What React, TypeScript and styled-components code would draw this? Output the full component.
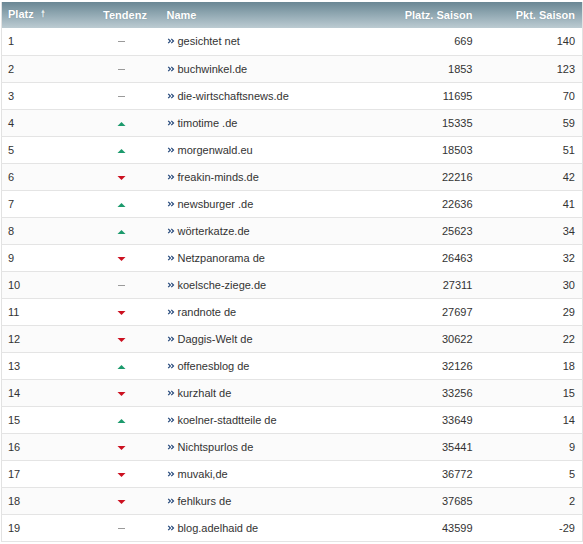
import React from "react";
import styled, { createGlobalStyle } from "styled-components";

const Global = createGlobalStyle`
  html, body { margin: 0; padding: 0; background: #fff; }
  body { font-family: "Liberation Sans", Arial, sans-serif; }
`;

type Trend = "up" | "down" | "same";
interface Row { place: number; trend: Trend; name: string; seasonPlace: number; points: number; }

const rows: Row[] = [
  { place: 1, trend: "same", name: "gesichtet net", seasonPlace: 669, points: 140 },
  { place: 2, trend: "same", name: "buchwinkel.de", seasonPlace: 1853, points: 123 },
  { place: 3, trend: "same", name: "die-wirtschaftsnews.de", seasonPlace: 11695, points: 70 },
  { place: 4, trend: "up", name: "timotime .de", seasonPlace: 15335, points: 59 },
  { place: 5, trend: "up", name: "morgenwald.eu", seasonPlace: 18503, points: 51 },
  { place: 6, trend: "down", name: "freakin-minds.de", seasonPlace: 22216, points: 42 },
  { place: 7, trend: "up", name: "newsburger .de", seasonPlace: 22636, points: 41 },
  { place: 8, trend: "up", name: "wörterkatze.de", seasonPlace: 25623, points: 34 },
  { place: 9, trend: "down", name: "Netzpanorama de", seasonPlace: 26463, points: 32 },
  { place: 10, trend: "same", name: "koelsche-ziege.de", seasonPlace: 27311, points: 30 },
  { place: 11, trend: "down", name: "randnote de", seasonPlace: 27697, points: 29 },
  { place: 12, trend: "down", name: "Daggis-Welt de", seasonPlace: 30622, points: 22 },
  { place: 13, trend: "up", name: "offenesblog de", seasonPlace: 32126, points: 18 },
  { place: 14, trend: "down", name: "kurzhalt de", seasonPlace: 33256, points: 15 },
  { place: 15, trend: "up", name: "koelner-stadtteile de", seasonPlace: 33649, points: 14 },
  { place: 16, trend: "down", name: "Nichtspurlos de", seasonPlace: 35441, points: 9 },
  { place: 17, trend: "down", name: "muvaki,de", seasonPlace: 36772, points: 5 },
  { place: 18, trend: "down", name: "fehlkurs de", seasonPlace: 37685, points: 2 },
  { place: 19, trend: "same", name: "blog.adelhaid de", seasonPlace: 43599, points: -29 },
];

const Wrap = styled.div`
  padding-top: 2px;
  padding-left: 1px;
  width: 581px;
`;

const Table = styled.table`
  width: 581px;
  border-collapse: collapse;
  table-layout: fixed;
  font-size: 11px;
  color: #333;
  border-left: 1px solid #e2e2e2;
  border-right: 1px solid #e2e2e2;
`;

const HeadRow = styled.tr`
  height: 26px;
  background: linear-gradient(to bottom, #6a8794 0%, #93aab4 50%, #bccbd2 100%);
`;

const Th = styled.th<{ $align?: "left" | "center" | "right" }>`
  color: #fff;
  font-weight: bold;
  font-size: 11px;
  text-align: ${(p) => p.$align ?? "left"};
  padding: 0 7px 0 6px;
  text-shadow: 0 0 1px rgba(60, 80, 90, 0.35);
  white-space: nowrap;
`;

const SortArrow = styled.span`
  display: inline-block;
  margin-left: 7px;
  color: #e4ebee;
  font-size: 9px;
  vertical-align: 1px;
`;

const BodyRow = styled.tr<{ $alt: boolean }>`
  height: 27px;
  background: ${(p) => (p.$alt ? "#fbfbfb" : "#ffffff")};
  border-bottom: 1px solid #e4e4e4;
`;

const Td = styled.td<{ $align?: "left" | "center" | "right" }>`
  text-align: ${(p) => p.$align ?? "left"};
  padding: 0 7px 0 6px;
  white-space: nowrap;
  overflow: hidden;
`;

const TrendBox = styled.span`
  display: inline-block;
  margin-right: 8px;
  line-height: 0;
  vertical-align: middle;
`;

const NameCell = styled.span`
  display: inline-flex;
  align-items: center;
  gap: 3px;
`;

const TrendIcon: React.FC<{ trend: Trend }> = ({ trend }) => {
  if (trend === "up")
    return (
      <svg width="9" height="6" viewBox="0 0 9 6">
        <polygon points="0.5,5 4.5,1 8.5,5" fill="#1b9a6c" />
      </svg>
    );
  if (trend === "down")
    return (
      <svg width="9" height="6" viewBox="0 0 9 6">
        <polygon points="0.5,1 8.5,1 4.5,5" fill="#cc1020" />
      </svg>
    );
  return (
    <svg width="9" height="6" viewBox="0 0 9 6">
      <rect x="1" y="2" width="7" height="1" fill="#9a9a9a" />
    </svg>
  );
};

const Chevrons = () => (
  <svg width="8" height="8" viewBox="0 0 8 8">
    <path d="M1.2 1.8 L3.4 4 L1.2 6.2 M4.3 1.8 L6.5 4 L4.3 6.2" stroke="#24477a" strokeWidth="1.2" fill="none" />
  </svg>
);

export default function App() {
  return (
    <Wrap>
      <Global />
      <Table>
        <colgroup>
          <col style={{ width: 89 }} />
          <col style={{ width: 70 }} />
          <col style={{ width: 198 }} />
          <col style={{ width: 121 }} />
          <col style={{ width: 103 }} />
        </colgroup>
        <thead>
          <HeadRow>
            <Th>
              Platz<SortArrow>🠕</SortArrow>
            </Th>
            <Th $align="center">Tendenz</Th>
            <Th>Name</Th>
            <Th $align="right">Platz. Saison</Th>
            <Th $align="right">Pkt. Saison</Th>
          </HeadRow>
        </thead>
        <tbody>
          {rows.map((r, i) => (
            <BodyRow key={r.place} $alt={i % 2 === 1}>
              <Td>{r.place}</Td>
              <Td $align="center">
                <TrendBox>
                  <TrendIcon trend={r.trend} />
                </TrendBox>
              </Td>
              <Td>
                <NameCell>
                  <Chevrons />
                  {r.name}
                </NameCell>
              </Td>
              <Td $align="right">{r.seasonPlace}</Td>
              <Td $align="right">{r.points}</Td>
            </BodyRow>
          ))}
        </tbody>
      </Table>
    </Wrap>
  );
}
